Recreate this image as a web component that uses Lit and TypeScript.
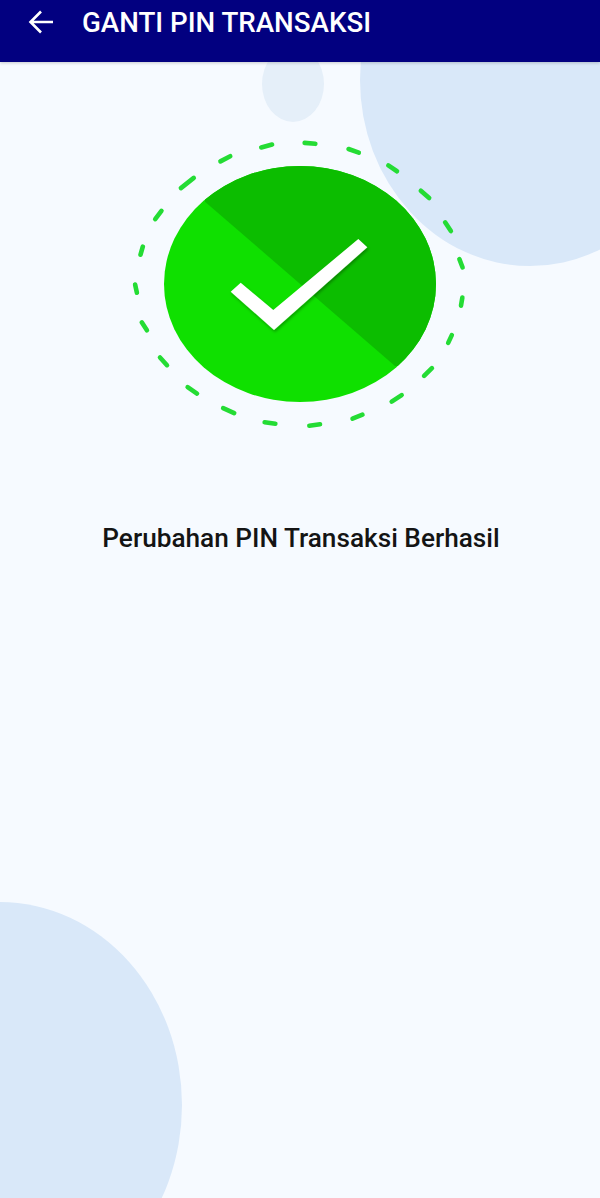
import { LitElement, html, css, svg } from "lit";
import { customElement } from "lit/decorators.js";

// Dash end points read off a 3x crop of the reference; divided by 3 when drawn
const dashes: number[][] = [
  [548,38,592,42],[680,55,722,70],[800,103,836,127],[898,178,932,208],[972,272,996,308],
  [1016,382,1030,418],[1028,497,1022,533],[998,610,982,644],[940,710,908,742],[850,792,810,818],
  [733,852,692,868],[606,882,562,888],[472,882,428,876],[348,852,304,832],[236,794,198,768],
  [145,710,116,678],[84,606,62,572],[52,494,44,458],[60,380,70,344],[102,272,128,238],
  [178,178,226,140],[296,97,336,76],[418,54,462,42],
];

// Pull each end in by the cap radius, so the rounded dash keeps its measured length
const inset = ([a, b, c, d]: number[]) => {
  const x1 = a / 3, y1 = b / 3, x2 = c / 3, y2 = d / 3;
  const len = Math.hypot(x2 - x1, y2 - y1);
  const ux = ((x2 - x1) / len) * 2, uy = ((y2 - y1) / len) * 2;
  return [x1 + ux, y1 + uy, x2 - ux, y2 - uy];
};

@customElement("app-root")
export class AppRoot extends LitElement {
  static styles = css`
    :host {
      display: block;
      position: relative;
      width: 600px;
      height: 1198px;
      overflow: hidden;
      background: #f6faff;
      font-family: Roboto, "Liberation Sans", sans-serif;
    }
    .bubble { position: absolute; border-radius: 50%; }
    .b1 { left: 262px; top: 46px; width: 62px; height: 76px; background: #e5eff9; }
    .b2 { left: 360px; top: -106px; width: 340px; height: 372px; background: #d9e8f9; }
    .b3 { left: -182px; top: 902px; width: 364px; height: 406px; background: #d9e8f9; }
    .bar {
      position: relative;
      height: 62px;
      background: #020080;
      color: #fff;
      display: flex;
      align-items: flex-start;
      gap: 29px;
      padding: 0 0 0 28px;
      box-shadow: 0 1px 3px rgba(0, 0, 0, 0.2);
    }
    .back { display: block; margin-top: 10px; }
    .title {
      font-size: 27.7px;
      font-weight: 500;
      line-height: 32px;
      margin-top: 7px;
    }
    main {
      position: relative;
      display: flex;
      flex-direction: column;
      align-items: center;
    }
    .hero { display: block; margin-top: 68px; }
    .msg {
      margin: 83px 0 0;
      padding-left: 2px;
      font-size: 26.2px;
      font-weight: 500;
      line-height: 30px;
      color: #141414;
    }
  `;

  render() {
    return html`
      <div class="bubble b1"></div>
      <div class="bubble b2"></div>
      <div class="bubble b3"></div>
      <header class="bar">
        <svg class="back" width="25" height="24" viewBox="0 0 25 24" fill="none" stroke="#fff" stroke-width="2.6">
          <path d="M25 12H3M13 1.5 2.5 12 13 22.5" />
        </svg>
        <div class="title">GANTI PIN TRANSAKSI</div>
      </header>
      <main>
        <svg class="hero" width="360" height="310" viewBox="0 0 360 310">
          <defs>
            <clipPath id="disc"><ellipse cx="180" cy="154" rx="136" ry="118" /></clipPath>
            <filter id="soft" x="-20%" y="-20%" width="140%" height="140%">
              <feDropShadow dx="1" dy="2" stdDeviation="1.6" flood-color="#000" flood-opacity="0.3" />
            </filter>
          </defs>
          <ellipse cx="180" cy="154" rx="136" ry="118" fill="#0fe000" />
          <path d="M85 71.7 275 236 400 236 400 -20 85 -20Z" fill="#0cbd00" clip-path="url(#disc)" />
          <path
            d="M110.7 161.7 120.7 152.7 153.3 180 238.3 109 247.3 117.3 154 200Z"
            fill="#fff"
            filter="url(#soft)"
          />
          ${dashes.map(inset).map(
            ([a, b, c, d]) => svg`<line x1=${a} y1=${b} x2=${c} y2=${d}
              stroke="#24dc34" stroke-width="4.6" stroke-linecap="round" />`
          )}
        </svg>
        <p class="msg">Perubahan PIN Transaksi Berhasil</p>
      </main>
    `;
  }
}
